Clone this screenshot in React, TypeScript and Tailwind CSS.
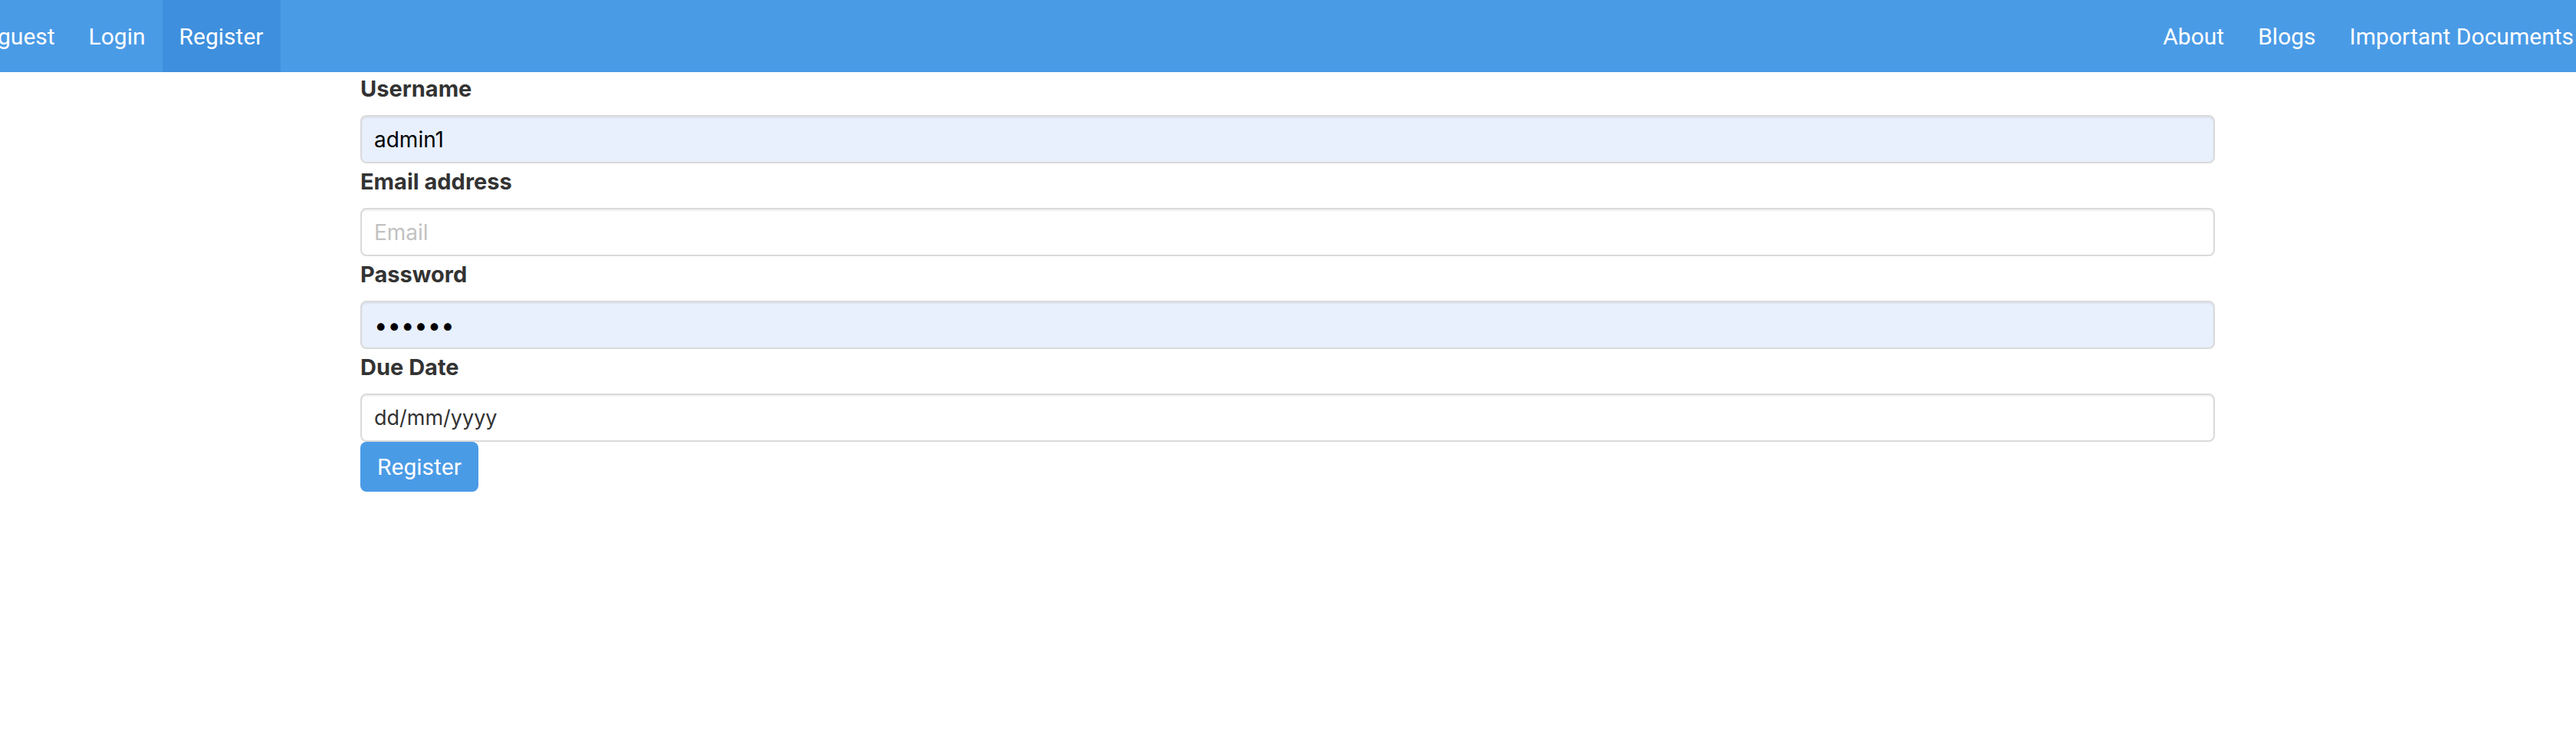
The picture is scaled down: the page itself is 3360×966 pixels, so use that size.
const navFont = { fontFamily: "Roboto, 'Liberation Sans', sans-serif" };

const NavItem = ({ label, active = false }: { label: string; active?: boolean }) => (
  <li>
    <a
      href="#"
      className={`flex h-[94px] items-center px-[22px] text-[30px] text-white ${active ? "bg-[#3e8fdd]" : ""}`}
    >
      {label}
    </a>
  </li>
);

const Label = ({ children }: { children: React.ReactNode }) => (
  <label className="mb-[19px] pt-[9px] text-[29px] font-bold leading-[30px] text-[#333333]">{children}</label>
);

const Field = ({
  label,
  type = "text",
  value,
  placeholder,
  autofill = false,
  big = false,
  first = false,
}: {
  label: string;
  type?: string;
  value?: string;
  placeholder?: string;
  autofill?: boolean;
  big?: boolean;
  first?: boolean;
}) => (
  <div className={`flex flex-col ${first ? "-mt-[2px]" : ""}`}>
    <Label>{label}</Label>
    <input
      type={type}
      readOnly
      value={value ?? ""}
      placeholder={placeholder}
      className={`h-[63px] w-full rounded-[8px] border-2 border-[#dadada] px-[16px] text-black shadow-[inset_0_2px_2px_rgba(0,0,0,0.06)] outline-none placeholder:text-[#c2c2c2] ${
        big ? "text-[31px]" : "text-[28px]"
      } ${autofill ? "bg-[#e8f0fe]" : "bg-white"}`}
    />
  </div>
);

export default function App() {
  return (
    <div className="min-h-[966px] w-[3360px] overflow-hidden bg-white" style={{ fontFamily: "Inter, 'Noto Sans', sans-serif" }}>
      <nav className="flex h-[94px] items-center justify-between bg-[#4a9be6]" style={navFont}>
        <ul className="-ml-[25px] flex">
          <NavItem label="guest" />
          <NavItem label="Login" />
          <NavItem label="Register" active />
        </ul>
        <ul className="-mr-[19px] flex">
          <NavItem label="About" />
          <NavItem label="Blogs" />
          <NavItem label="Important Documents" />
        </ul>
      </nav>

      <form className="ml-[470px] flex w-[2419px] flex-col">
        <Field label="Username" value="admin1" autofill first />
        <Field label="Email address" placeholder="Email" />
        <Field label="Password" type="password" value="123456" autofill big />
        <div className="flex flex-col">
          <Label>Due Date</Label>
          <input
            type="text"
            readOnly
            value="dd/mm/yyyy"
            className="h-[63px] w-full rounded-[8px] border-2 border-[#dadada] bg-white px-[16px] text-[27px] text-[#333333] shadow-[inset_0_2px_2px_rgba(0,0,0,0.06)] outline-none"
          />
        </div>
        <div>
          <button
            type="button"
            className="h-[65px] w-[154px] rounded-[8px] bg-[#4a9be6] text-[30px] text-white"
            style={navFont}
          >
            Register
          </button>
        </div>
      </form>
    </div>
  );
}
